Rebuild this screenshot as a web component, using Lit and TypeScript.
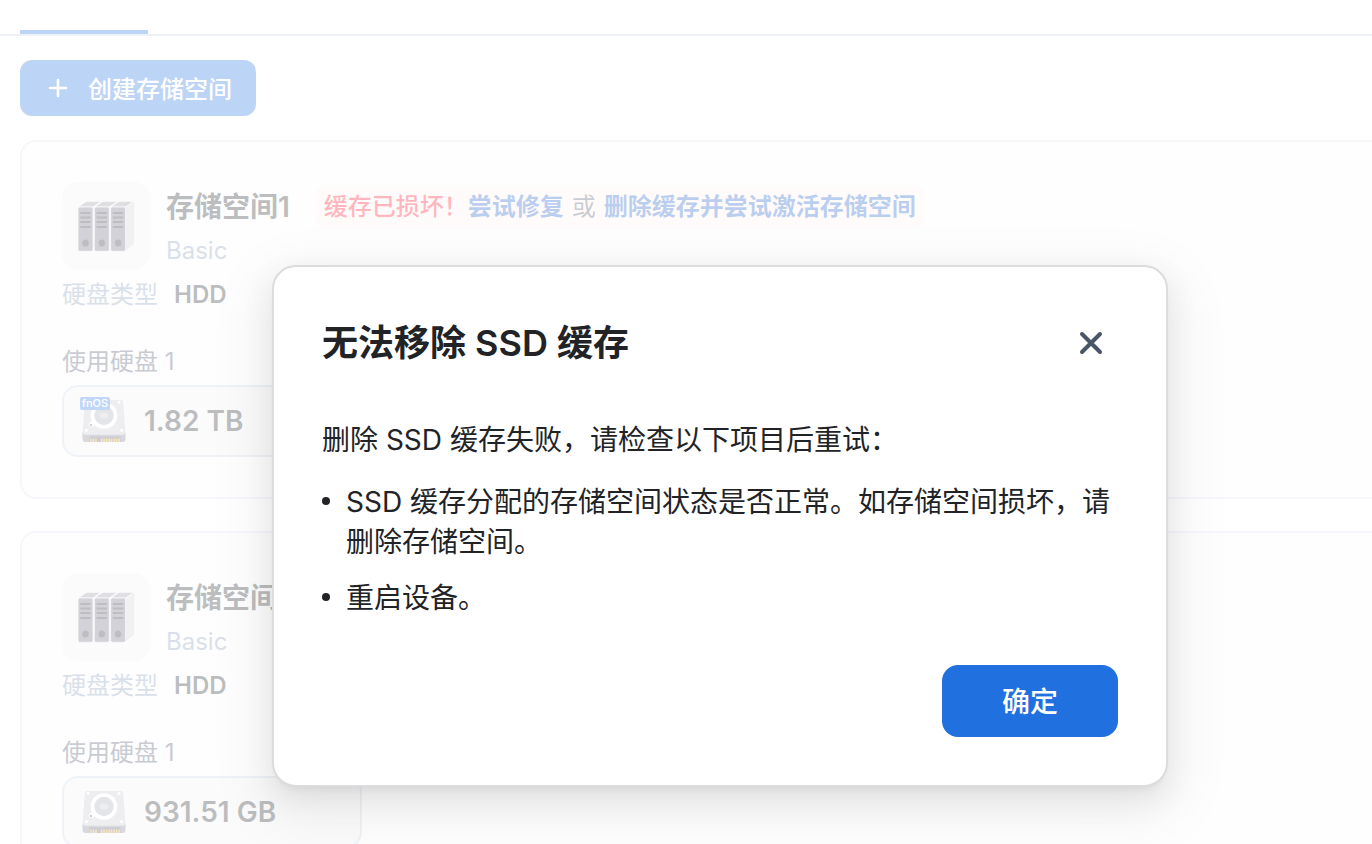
import { LitElement, html, css, svg, nothing } from "lit";
import { customElement, property, state } from "lit/decorators.js";

interface Pool {
  name: string;
  level: string;
  diskType: string;
  disks: { size: string; system: boolean }[];
  broken: boolean;
}

const POOLS: Pool[] = [
  { name: "存储空间1", level: "Basic", diskType: "HDD", disks: [{ size: "1.82 TB", system: true }], broken: true },
  { name: "存储空间2", level: "Basic", diskType: "HDD", disks: [{ size: "931.51 GB", system: false }], broken: false },
];

const bay = (x: number) => svg`
  <path d="M${x} 25 L${x + 7} 20.200 Q${x + 8.5} 19.300 ${x + 10} 19.300 H${x + 21.5} Q${x + 23} 19.500 ${x + 21.5} 20.500 L${x + 15} 25 Z" fill="#9092a0" stroke="#fafafb" stroke-width=".8"/>
  <rect x="${x}" y="25" width="15" height="44.300" rx="1.800" fill="#686a7c" stroke="#f0f0f4" stroke-width=".8"/>
  <path d="M${x + 2.3} 31h10.400M${x + 2.3} 35.500h10.400M${x + 2.3} 40h10.400M${x + 2.3} 45h10.400" stroke="#24252b" stroke-width="2"/>
  <ellipse cx="${x + 7.5}" cy="61" rx="3.200" ry="3.600" fill="#24252b"/>`;

@customElement("pool-icon")
export class PoolIcon extends LitElement {
  static styles = css`
    :host { display: block; width: 88px; height: 88px; flex: none; border-radius: 16px; background: #f1f1f3; }
    svg { display: block; width: 100%; height: 100%; }
  `;
  render() {
    return html`<svg viewBox="0 0 88 88" aria-hidden="true">
      <path d="M63 26 L70.500 20 Q72.300 19 72.300 21.500 V60 Q72.300 61.800 71 62.800 L63 69 Z" fill="#cfcfd8"/>
      ${bay(16)}${bay(32.3)}${bay(48.6)}
    </svg>`;
  }
}

@customElement("disk-icon")
export class DiskIcon extends LitElement {
  static styles = css`
    :host { display: block; flex: none; position: relative; width: 44px; height: 44px; }
    svg { display: block; width: 100%; height: 100%; }
    .tag {
      position: absolute; left: -2px; top: -2px; width: 30px; border-radius: 2px; text-align: center;
      background: #3078e8; color: #fff; font-size: 11px; font-weight: 500; line-height: 13px;
    }
  `;
  @property({ type: Boolean }) system = false;
  render() {
    return html`<svg viewBox="0 0 44 44" aria-hidden="true">
        <path d="M5 1 H39 Q41 1 41.200 3 L43.500 34 V35 H.5 V34 L2.800 3 Q3 1 5 1Z" fill="#c6c7ce"/>
        <path d="M.5 33.500 Q1 35.500 3 35.500 H41 Q43 35.500 43.500 33.500 V40 Q43.500 43 40.500 43 H3.500 Q.5 43 .5 40Z" fill="#7c7e92"/>
        <rect x="7.500" y="37.500" width="31" height="5.500" fill="#55576a"/>
        <path d="M9 43v-3.500M11.500 43v-3.500M14 43v-3.500M19.500 43v-3.500M22 43v-3.500M24.500 43v-3.500M27 43v-3.500M29.500 43v-3.500M32 43v-3.500M34.500 43v-3.500M37 43v-3.500" stroke="#f0b428" stroke-width="1.500"/>
        <path d="M9.500 25.500l4-3" stroke="#fff" stroke-width="5" stroke-linecap="round"/>
        <circle cx="22" cy="16.500" r="11.500" fill="#a4a7b2" stroke="#fff" stroke-width="3.600"/>
        <ellipse cx="22" cy="16.500" rx="4.500" ry="3" fill="#c6c7ce"/>
        <circle cx="9" cy="26" r="1.200" fill="#55576a"/>
        <g fill="#fff"><circle cx="6" cy="3.500" r="1.400"/><circle cx="37" cy="3.500" r="1.400"/><circle cx="4.500" cy="31.500" r="1.400"/><circle cx="39.500" cy="31.500" r="1.400"/></g>
      </svg>
      ${this.system ? html`<span class="tag">fnOS</span>` : nothing}`;
  }
}

@customElement("pool-card")
export class PoolCard extends LitElement {
  static styles = css`
    :host { display: block; border: 2px solid #e4e4f2; border-radius: 16px; padding: 40px; background: #fbfbfc; color: #212327; }
    .head { display: flex; gap: 16px; }
    .info { display: flex; flex-direction: column; gap: 4px; padding-top: 5px; }
    .title { display: flex; align-items: center; gap: 26px; height: 40px; }
    h2 { margin: 0; font-size: 28px; line-height: 40px; font-weight: 600; }
    .alert { display: flex; gap: 8px; padding: 0 8px; border-radius: 8px; background: #fff0f0; font-size: 24px; line-height: 40px; color: #4a5568; }
    .error { color: #ff0a1e; font-weight: 500; }
    a { color: #1a5fc8; font-weight: 600; text-decoration: none; }
    .level { font-size: 24px; line-height: 39px; color: #8297b8; }
    .type { display: flex; gap: 16px; margin-top: 8px; font-size: 24px; line-height: 34px; color: #8297b8; }
    .type strong { font-weight: 600; color: #212327; }
    .used { margin: 33px 0 7px; font-size: 24px; line-height: 33px; color: #4a5068; }
    .disks { display: flex; gap: 16px; margin: 0; padding: 0; list-style: none; }
    .disk {
      display: flex; align-items: center; gap: 18px; box-sizing: border-box; width: 300px; height: 72px;
      padding: 0 18px; border: 2px solid #c8d8e8; border-radius: 16px; background: #f1f2f4; font-size: 28px; font-weight: 600;
    }
  `;
  @property({ attribute: false }) pool!: Pool;
  render() {
    const p = this.pool;
    return html`
      <div class="head">
        <pool-icon></pool-icon>
        <div class="info">
          <div class="title">
            <h2>${p.name}</h2>
            ${p.broken
              ? html`<div class="alert"><span><span class="error">缓存已损坏！</span><a href="#repair">尝试修复</a></span><span>或</span><a href="#activate">删除缓存并尝试激活存储空间</a></div>`
              : nothing}
          </div>
          <div class="level">${p.level}</div>
        </div>
      </div>
      <div class="type"><span>硬盘类型</span><strong>${p.diskType}</strong></div>
      <div class="used">使用硬盘 ${p.disks.length}</div>
      <ul class="disks">
        ${p.disks.map((d) => html`<li class="disk"><disk-icon ?system=${d.system}></disk-icon><span>${d.size}</span></li>`)}
      </ul>`;
  }
}

@customElement("app-root")
export class AppRoot extends LitElement {
  static styles = css`
    :host {
      display: block; height: 100vh; overflow: hidden; background: #fff;
      font-family: Inter, "Noto Sans CJK SC", sans-serif;
    }
    .stage { position: relative; width: calc(100% + 68px); height: 100%; overflow: hidden; }
    .tabs { height: 34px; border-bottom: 2px solid #c8d8e8; display: flex; align-items: flex-end; padding: 0 20px; }
    .tab { width: 128px; height: 4px; background: #2070e0; }
    main { display: flex; flex-direction: column; align-items: flex-start; padding: 24px 20px; }
    button { font-family: inherit; border: 0; margin: 0; color: #fff; background: #2070e0; cursor: pointer; }
    .create { display: flex; align-items: center; gap: 16px; height: 56px; padding: 0 24px 2px; border-radius: 12px; font-size: 24px; font-weight: 500; }
    .create svg { width: 28px; height: 28px; }
    .pools { align-self: stretch; display: flex; flex-direction: column; gap: 32px; margin-top: 24px; }
    .scrim { position: absolute; inset: 0; display: flex; justify-content: center; align-items: flex-start; padding-top: 265px; background: rgba(255, 255, 255, 0.7); }
    .dialog {
      box-sizing: border-box; width: 896px; padding: 48px; border: 2px solid #dcdcde; border-radius: 24px;
      background: #fff; color: #212327; font-size: 28px; line-height: 40px;
      box-shadow: 0 12px 32px rgba(0, 0, 0, 0.08), 0 6px 12px -8px rgba(0, 0, 0, 0.12), 0 18px 56px 16px rgba(0, 0, 0, 0.05);
    }
    header { display: flex; align-items: center; justify-content: space-between; height: 56px; }
    h1 { margin: 0; font-size: 36px; line-height: 56px; font-weight: 600; }
    .close { width: 54px; height: 56px; padding: 0; background: none; display: grid; place-items: center; }
    .close svg { width: 24px; height: 24px; }
    p { margin: 49px 0 22px; }
    .checks { margin: 0; padding: 0; list-style: none; display: flex; flex-direction: column; gap: 16px; }
    .checks li { display: grid; grid-template-columns: 8px 1fr; gap: 16px; }
    .checks li::before { content: ""; width: 8px; height: 8px; margin-top: 15px; border-radius: 50%; background: #212327; }
    footer { display: flex; justify-content: flex-end; margin-top: 47px; }
    .ok { width: 176px; height: 72px; padding: 0 0 2px; border-radius: 16px; font-size: 28px; font-weight: 500; }
  `;
  @state() private open = true;
  private close = () => { this.open = false; };
  render() {
    return html`
      <div class="stage" lang="zh-CN">
        <nav class="tabs"><div class="tab"></div></nav>
        <main>
          <button class="create">
            <svg viewBox="0 0 28 28" aria-hidden="true"><path d="M14 7v16M6 15h16" stroke="#fff" stroke-width="2.600" stroke-linecap="round"/></svg>
            <span>创建存储空间</span>
          </button>
          <div class="pools">${POOLS.map((p) => html`<pool-card .pool=${p}></pool-card>`)}</div>
        </main>
        ${this.open
          ? html`<div class="scrim">
              <section class="dialog" role="dialog" aria-modal="true" aria-labelledby="dialog-title">
                <header>
                  <h1 id="dialog-title">无法移除 SSD 缓存</h1>
                  <button class="close" aria-label="关闭" @click=${this.close}>
                    <svg viewBox="0 0 24 24" aria-hidden="true"><path d="M3 3l18 18M21 3L3 21" stroke="#4a5568" stroke-width="4" stroke-linecap="round"/></svg>
                  </button>
                </header>
                <p>删除 SSD 缓存失败，请检查以下项目后重试：</p>
                <ul class="checks">
                  <li>SSD 缓存分配的存储空间状态是否正常。如存储空间损坏，请删除存储空间。</li>
                  <li>重启设备。</li>
                </ul>
                <footer><button class="ok" @click=${this.close}>确定</button></footer>
              </section>
            </div>`
          : nothing}
      </div>`;
  }
}
